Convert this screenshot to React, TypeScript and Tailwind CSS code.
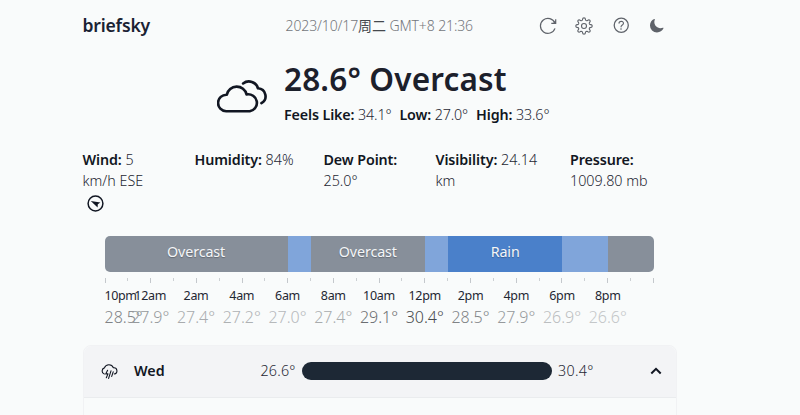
import React from "react";
import { IoHelpCircleOutline, IoMoon } from "react-icons/io5";

const segments = [
  { hours: 8, label: "Overcast", color: "bg-[#878f9a]" },
  { hours: 1, label: "", color: "bg-[#80a5da]" },
  { hours: 5, label: "Overcast", color: "bg-[#878f9a]" },
  { hours: 1, label: "", color: "bg-[#80a5da]" },
  { hours: 5, label: "Rain", color: "bg-[#4a80ca]" },
  { hours: 2, label: "", color: "bg-[#80a5da]" },
  { hours: 2, label: "", color: "bg-[#878f9a]" },
];

const hours = [
  { time: "12am", temp: "27.9°", tone: "text-[#96999c]" },
  { time: "2am", temp: "27.4°", tone: "text-[#a8abad]" },
  { time: "4am", temp: "27.2°", tone: "text-[#aeb1b3]" },
  { time: "6am", temp: "27.0°", tone: "text-[#b6b9bb]" },
  { time: "8am", temp: "27.4°", tone: "text-[#a8abad]" },
  { time: "10am", temp: "29.1°", tone: "text-[#6b6e71]" },
  { time: "12pm", temp: "30.4°", tone: "text-[#484b4e]" },
  { time: "2pm", temp: "28.5°", tone: "text-[#808386]" },
  { time: "4pm", temp: "27.9°", tone: "text-[#96999c]" },
  { time: "6pm", temp: "26.9°", tone: "text-[#bbbec0]" },
  { time: "8pm", temp: "26.6°", tone: "text-[#c4c7c9]" },
];

// Outline of an eight-toothed gear, sampled around the circle.
const gearPath =
  "M" +
  Array.from({ length: 96 }, (_, i) => {
    const a = (i / 96) * Math.PI * 2;
    const wave = Math.tanh(1.8 * Math.cos(8 * a));
    const r = 7 + 1.2 * wave;
    return `${(9 + r * Math.sin(a)).toFixed(2)} ${(9 - r * Math.cos(a)).toFixed(2)}`;
  }).join("L") +
  "Z";

function Stat({ name, children }: { name: string; children: React.ReactNode }) {
  return (
    <div className="whitespace-nowrap">
      <b className="font-semibold tracking-[-0.1px] text-[#111622]">{name}:</b>
      {children}
    </div>
  );
}

export default function App() {
  return (
    <div className="h-[415px] w-[800px] overflow-hidden bg-[#f9fbfb] pl-[82.5px] font-['Noto_Sans','Noto_Sans_CJK_SC',sans-serif] text-[14.3px] leading-[21.5px] font-light text-[#1f2733]">
      <header className="flex h-[51px] w-[594px] items-center text-[#5f636a]">
        <div className="w-[203px] text-[17.6px] font-semibold tracking-[-0.2px] text-[#1a2233]">briefsky</div>
        <div className="w-[253px] text-[14px] tracking-[-0.11px] whitespace-nowrap text-[#74777c]">
          2023/10/17<span className="font-normal text-[#45484d]">周二</span> GMT+8 21:36
        </div>
        <div className="flex items-center gap-[18px]">
          <svg width="18" height="18" viewBox="0 0 18 18" fill="none" stroke="currentColor" strokeWidth="1.2">
            <path d="M16 11.4A7.5 7.5 0 1 1 15.9 6.1M16.7 2.2V6.4H12.3M16.5 4.5 14.5 6.2" />
          </svg>
          <svg className="ml-[0.5px]" width="18" height="18" viewBox="0 0 18 18" fill="none" stroke="currentColor" strokeWidth="1.1">
            <path d={gearPath} />
            <circle cx="9" cy="9" r="2.5" />
          </svg>
          <IoHelpCircleOutline className="-mx-[0.5px]" size={20.5} />
          <IoMoon size={15.5} />
        </div>
      </header>

      <section className="flex h-[97.5px] pt-3">
        <div className="w-[201.5px] pt-[14px] pl-[134px]">
          <svg width="53" height="36" viewBox="0 0 52 36" preserveAspectRatio="none" fill="none" stroke="#111622" strokeWidth="2.6" strokeLinecap="round" strokeLinejoin="round">
            <path d="M9 34.2A8.2 8.2 0 0 1 9.6 17.7 9.9 9.9 0 0 1 29 17.4 8.4 8.4 0 0 1 32.2 34.2Z" />
            <path d="M25.6 6.4A9.2 9.2 0 0 1 40.2 11.3 8 8 0 0 1 43.6 26.2" />
          </svg>
        </div>
        <div className="whitespace-nowrap">
          <h1 className="h-[41px] text-[31.5px] leading-[31px] font-semibold tracking-[0.16px] text-[#1c202b]">28.6° Overcast</h1>
          <div className="flex gap-[8px] tracking-[-0.13px]">
            <span><b className="font-semibold text-[#111622]">Feels Like:</b> 34.1°</span>
            <span><b className="font-semibold text-[#111622]">Low:</b> 27.0°</span>
            <span><b className="font-semibold text-[#111622]">High:</b> 33.6°</span>
          </div>
        </div>
      </section>

      <section className="grid h-[87px] grid-cols-[112px_129px_112px_134.5px_100px]">
        <Stat name="Wind">
          {" "}5<br />km/h ESE
          <svg className="mt-[3px] ml-[4px]" width="17" height="17" viewBox="0 0 17 17" fill="none">
            <circle cx="8.5" cy="8.5" r="7.4" stroke="#111622" strokeWidth="1.5" />
            <path d="M3.8 6.1 13.4 7.6 10.8 9.2 10.6 12.6Z" fill="#111622" />
          </svg>
        </Stat>
        <Stat name="Humidity"> 84%</Stat>
        <Stat name="Dew Point"><br />25.0°</Stat>
        <Stat name="Visibility"> 24.14<br />km</Stat>
        <Stat name="Pressure"><br />1009.80 mb</Stat>
      </section>

      <section className="ml-[22px] w-[549.5px]">
        <div className="flex h-[36px] overflow-hidden rounded-[5px]">
          {segments.map((s, i) => (
            <div
              key={i}
              className={`flex items-center justify-center pb-[3px] font-normal tracking-[-0.12px] text-[#f4f6f8] [text-shadow:0_1px_1px_#0004] ${s.color}`}
              style={{ flex: `${s.hours} 0 0` }}
            >
              {s.label}
            </div>
          ))}
        </div>
        <div className="mt-[6px] flex h-[5px] justify-between">
          {Array.from({ length: 25 }, (_, i) => (
            <i key={i} className={i % 2 ? "h-[3px] w-px bg-[#ccd0d3]" : "h-[5px] w-px bg-[#c4c8cc]"} />
          ))}
        </div>
        <div className="flex pt-[4.5px] whitespace-nowrap">
          <div className="w-[22.9px]">
            <div className="text-[12.5px] leading-[18px] font-normal tracking-[-0.4px]">10pm</div>
            <div className="text-[16px] leading-[25px] text-[#808386]">28.5°</div>
          </div>
          {hours.map((h) => (
            <div key={h.time} className="flex w-[45.75px] flex-col items-center">
              <div className="text-[12.5px] leading-[18px] font-normal tracking-[-0.3px]">{h.time}</div>
              <div className={`text-[16px] leading-[25px] ${h.tone}`}>{h.temp}</div>
            </div>
          ))}
        </div>
      </section>

      <section className="mt-[15px] h-[80px] w-[594px] rounded-t-lg border border-[#f1f2f4]">
        <div className="flex h-[52px] items-center rounded-t-lg border-b border-[#eaecee] bg-[#f3f4f6] pb-[1px] pl-[17px]">
          <svg className="shrink-0" width="17" height="17" viewBox="0 0 17 17" fill="none" stroke="#111622" strokeWidth="1.1" strokeLinecap="round" strokeLinejoin="round">
            <path d="M3.3 11A3.2 3.2 0 0 1 3.4 4.9 4.8 4.8 0 0 1 12.4 4.8 3.1 3.1 0 0 1 13.2 11" />
            <path d="M6.6 7.3 4.7 10.9H7L5.3 14.8M10 7.8 7.6 15.4M12.2 8.8 10.7 13.4" />
          </svg>
          <div className="w-[143px] shrink-0 pl-[16.5px] font-semibold text-[#111622]">Wed</div>
          <div className="w-[41.5px] shrink-0 tracking-[0.2px]">26.6°</div>
          <div className="h-[18px] w-[250px] shrink-0 rounded-full bg-[#1d2835]" />
          <div className="w-[98px] shrink-0 pl-[6px] tracking-[0.3px]">30.4°</div>
          <svg className="shrink-0" width="12" height="12" viewBox="0 0 12 12" fill="none" stroke="#111622" strokeWidth="2">
            <path d="m1.3 8.5 4.7-4.7 4.7 4.7" />
          </svg>
        </div>
      </section>
    </div>
  );
}
